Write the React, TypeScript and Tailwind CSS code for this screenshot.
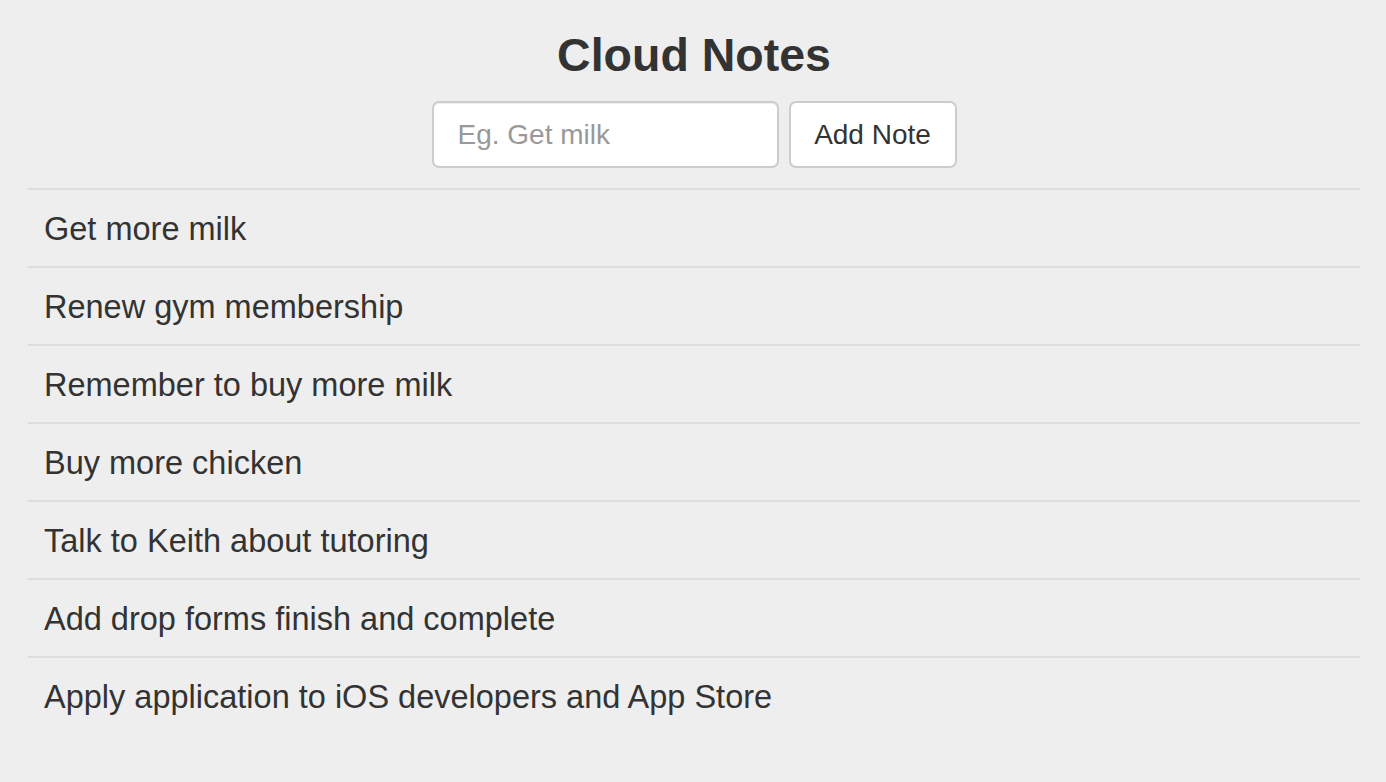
import React from "react";

const notes = [
  "Get more milk",
  "Renew gym membership",
  "Remember to buy more milk",
  "Buy more chicken",
  "Talk to Keith about tutoring",
  "Add drop forms finish and complete",
  "Apply application to iOS developers and App Store",
];

export default function App() {
  return (
    <div className="min-h-[782px] bg-[#eeeeee] text-[#333333] pl-[28px] pr-[26px] font-['Liberation_Sans',Arial,sans-serif]">
      <div className="pt-[30px] flex flex-col items-center">
        <h1 className="text-[46.5px] font-bold leading-[50px] m-0">Cloud Notes</h1>
        <form className="mt-[21px] flex gap-[10px]" onSubmit={(e) => e.preventDefault()}>
          <input
            type="text"
            placeholder="Eg. Get milk"
            className="w-[347px] h-[67px] bg-white border-2 border-[#cccccc] rounded-[7px] px-[24px] text-[28px] text-[#333] placeholder:text-[#999999] shadow-[inset_0_1px_1px_rgba(0,0,0,0.075)] outline-none"
          />
          <button
            type="submit"
            className="w-[168px] h-[67px] bg-white border-2 border-[#cccccc] rounded-[7px] text-[28px] text-[#333]"
          >
            Add Note
          </button>
        </form>
      </div>
      <ul className="mt-[20px]">
        {notes.map((n) => (
          <li key={n} className="border-t-2 border-[#dddddd] px-[16px] pt-[17px] pb-[15px] text-[32.5px] leading-[44px]">
            {n}
          </li>
        ))}
      </ul>
    </div>
  );
}
